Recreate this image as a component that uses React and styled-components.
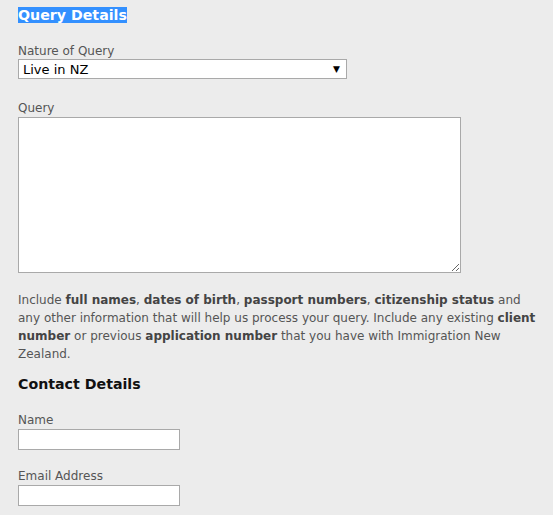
import styled, { createGlobalStyle } from "styled-components";

const Global = createGlobalStyle`
  html, body {
    margin: 0;
    padding: 0;
    background: #ececec;
  }
  body {
    font-family: "DejaVu Sans", Verdana, sans-serif;
  }
`;

const Page = styled.div`
  padding: 6px 18px 20px 18px;
  width: 553px;
  box-sizing: border-box;
`;

const Heading = styled.h2`
  margin: ${(p) => p.$top || 0}px 0 0 0;
  font-size: 14.2px;
  line-height: 18px;
  font-weight: bold;
  color: #111;
  span {
    background: ${(p) => (p.$selected ? "#3390ff" : "transparent")};
    color: ${(p) => (p.$selected ? "#fff" : "#111")};
  }
`;

const Field = styled.div`
  display: flex;
  flex-direction: column;
  align-items: flex-start;
  margin-top: ${(p) => p.$top}px;
`;

const Label = styled.label`
  font-size: 12px;
  line-height: 15px;
  color: #555;
  margin-bottom: ${(p) => (p.$tight ? 0 : 1)}px;
`;

const SelectBox = styled.div`
  width: 329px;
  height: 20px;
  box-sizing: border-box;
  background: #fff;
  border: 1px solid #a9a9a9;
  display: flex;
  align-items: center;
  justify-content: space-between;
  padding: 0 6px 0 4px;
  font-size: 13px;
  color: #000;
  span.arrow {
    font-size: 9px;
  }
`;

const TextArea = styled.textarea`
  width: 443px;
  height: 156px;
  box-sizing: border-box;
  background: #fff;
  border: 1px solid #a9a9a9;
  border-radius: 0;
  margin: 0;
  resize: both;
`;

const Input = styled.input`
  width: 162px;
  height: 21px;
  box-sizing: border-box;
  background: #fff;
  border: 1px solid #a9a9a9;
  border-radius: 0;
  margin: 0;
`;

const Help = styled.p`
  margin: 18px 0 0 0;
  font-size: 12px;
  line-height: 18px;
  color: #555;
  width: 525px;
  b {
    color: #444;
  }
`;

export default function App() {
  return (
    <Page>
      <Global />
      <Heading $selected>
        <span>Query Details</span>
      </Heading>
      <Field $top={20}>
        <Label $tight>Nature of Query</Label>
        <SelectBox>
          <span>Live in NZ</span>
          <span className="arrow">▼</span>
        </SelectBox>
      </Field>
      <Field $top={22}>
        <Label>Query</Label>
        <TextArea />
      </Field>
      <Help>
        Include <b>full names</b>, <b>dates of birth</b>, <b>passport numbers</b>,{" "}
        <b>citizenship status</b> and any other information that will help us process your
        query. Include any existing <b>client number</b> or previous{" "}
        <b>application number</b> that you have with Immigration New Zealand.
      </Help>
      <Heading $top={12}>
        <span>Contact Details</span>
      </Heading>
      <Field $top={20}>
        <Label>Name</Label>
        <Input />
      </Field>
      <Field $top={19}>
        <Label>Email Address</Label>
        <Input />
      </Field>
    </Page>
  );
}
